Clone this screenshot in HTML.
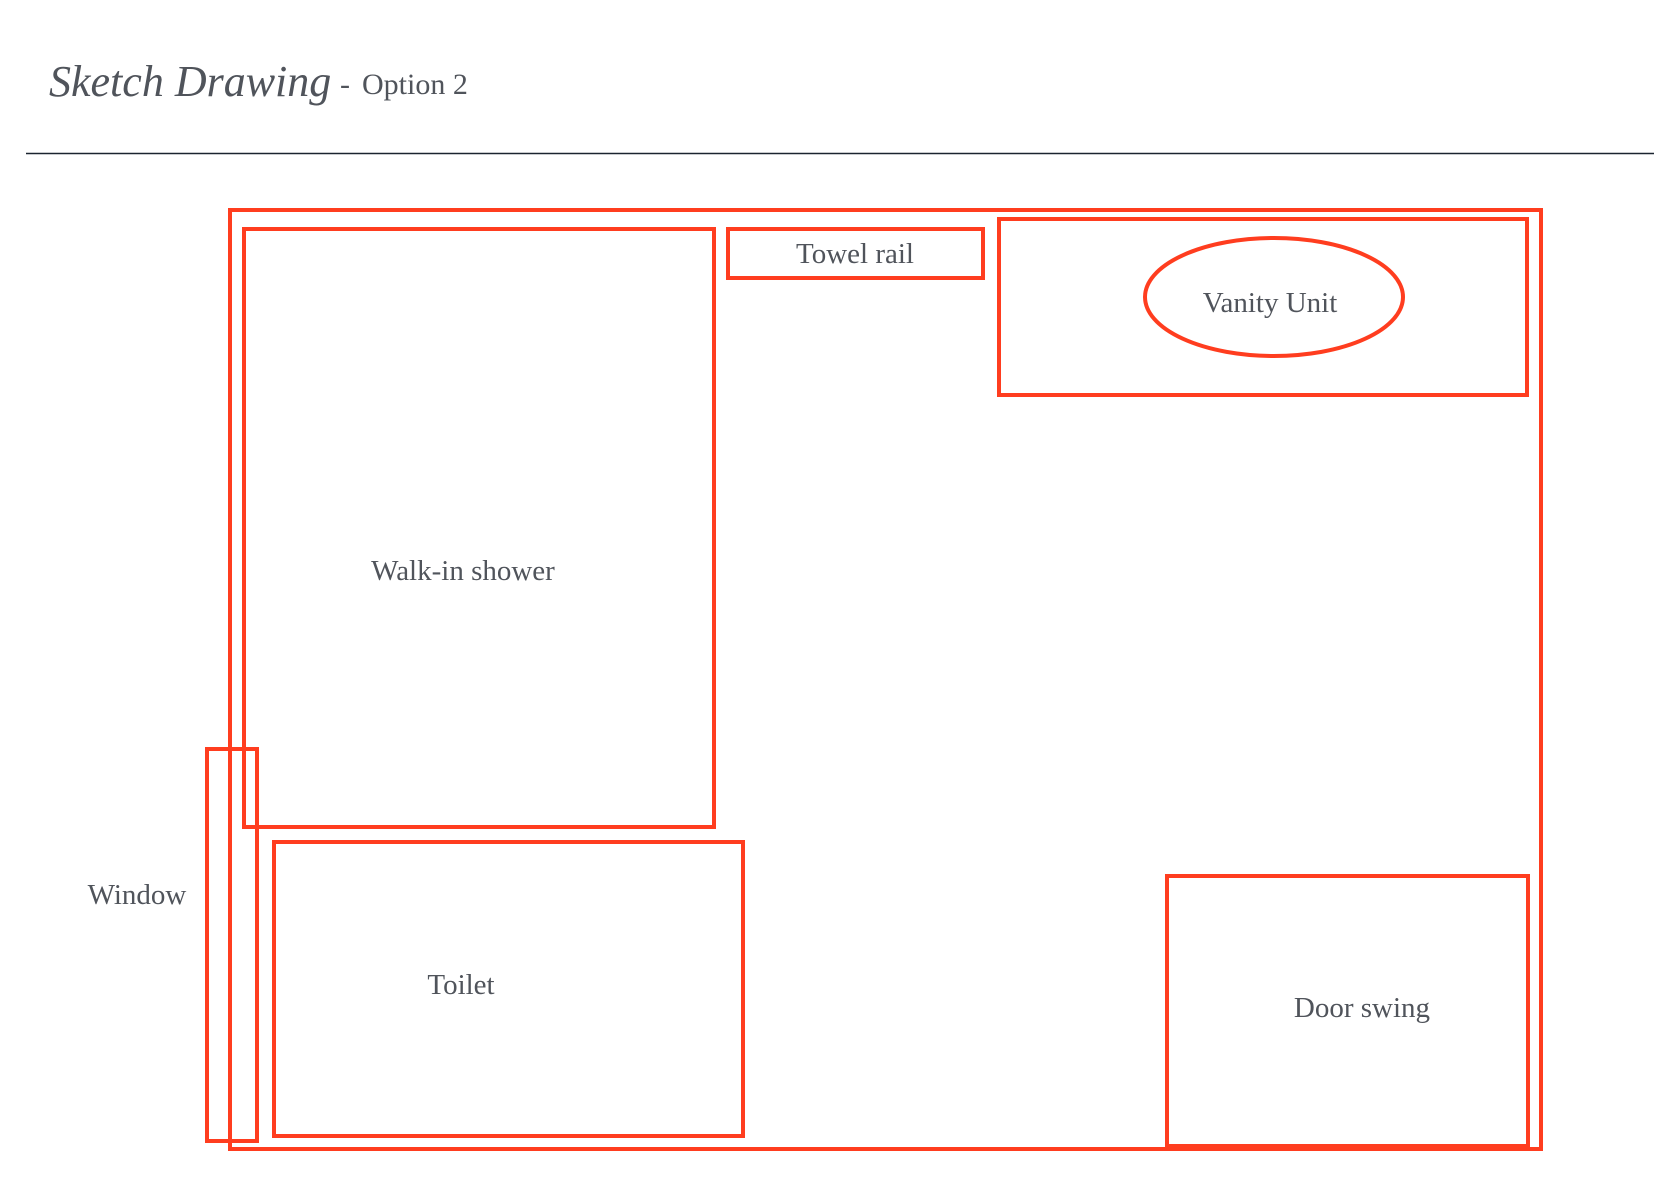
<!DOCTYPE html>
<html><head><meta charset="utf-8"><style>
html,body{margin:0;padding:0;background:#fff;width:1678px;height:1184px;overflow:hidden}
svg{display:block}
text{font-family:"Liberation Serif",serif;fill:#50545b}
</style></head><body>
<svg width="1678" height="1184" viewBox="0 0 1678 1184">
<text x="49" y="96" style="font-style:italic;font-size:44px">Sketch Drawing</text>
<text x="340" y="94" style="font-size:30px">-</text>
<text x="362" y="94" style="font-size:30px">Option 2</text>
<line x1="26" y1="153.5" x2="1654" y2="153.5" stroke="#1b2430" stroke-width="1.5"/>
<g fill="none" stroke="#ff3d1f" stroke-width="4">
<rect x="230" y="210" width="1311" height="939"/>
<rect x="244" y="229" width="470" height="598"/>
<rect x="728" y="229" width="255" height="49"/>
<rect x="999" y="219" width="528" height="176"/>
<ellipse cx="1274" cy="297" rx="129" ry="59"/>
<rect x="207" y="749" width="50" height="392"/>
<rect x="274" y="842" width="469" height="294"/>
<rect x="1167" y="876" width="361" height="270"/>
</g>
<g style="font-size:29px" text-anchor="middle">
<text x="855" y="263">Towel rail</text>
<text x="1270" y="312">Vanity Unit</text>
<text x="463" y="580">Walk-in shower</text>
<text x="137" y="904">Window</text>
<text x="461" y="994">Toilet</text>
<text x="1362" y="1017">Door swing</text>
</g>
</svg>
</body></html>
